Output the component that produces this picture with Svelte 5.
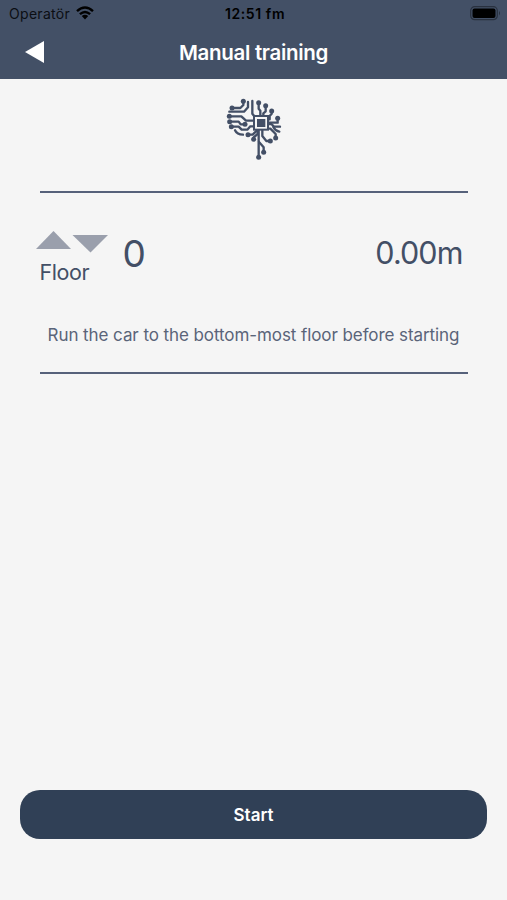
<script lang="ts">
    let carrier = $state('Operatör');
    let time = $state('12:51 fm');
    let floor = $state<number>(0);
    let height = $state<number>(0);

    // copper traces of the brain logo
    const traces = [
        'M70 28V39L61 48H36',
        'M84 30V46L72 59H28',
        'M97 27V65L105 75',
        'M28 73H64L78 86H102',
        'M29 89H56L62 97H75',
        'M34 104H56L65 113H82L91 103H102',
        'M45 115Q51 128 69 128',
        'M84 128H98L111 115',
        'M101 142V136L113 126V113',
        'M116 196V112',
        'M131 181V166L117 150',
        'M151 147H139L127 132V112',
        'M167 138V126L151 110H144',
        'M180 104H162L154 96H144',
        'M178 119Q166 117 160 105',
        'M173 79V92H144',
        'M155 57V65L149 72V82H144',
        'M137 41V58L130 64V75',
        'M116 32V50L121 56V75'
    ];

    const pads = [
        [70, 28], [36, 48], [28, 73], [29, 89], [75, 97], [34, 104],
        [84, 128], [101, 142], [116, 196], [131, 181], [151, 147],
        [167, 138], [173, 79], [155, 57], [137, 41], [116, 32]
    ];
</script>


<div class="screen">
    <header>
        <div class="status-bar">
            <div class="carrier">
                <span>{carrier}</span>
                <svg class="wifi" viewBox="0 0 18 14">
                    <path d="M1 5.2Q9-2.2 17 5.2M3.9 8.2Q9 3.6 14.1 8.2" />
                    <path class="dot" d="M5.8 10.1Q9 7.5 12.2 10.1L9 13.4Z" />
                </svg>
            </div>
            <span class="time">{time}</span>
            <svg class="battery" viewBox="0 0 31 15">
                <rect class="case" x="0.7" y="0.7" width="26.6" height="13" rx="4" />
                <rect x="2.5" y="2.5" width="23" height="9.4" rx="2" />
                <path class="tip" d="M29 5Q31 7.2 29 9.4Z" />
            </svg>
        </div>
        <div class="nav-bar">
            <button class="back" aria-label="Back">
                <svg viewBox="0 0 19 22"><path d="M0 11L19 0V22Z" /></svg>
            </button>
            <h1>Manual training</h1>
        </div>
    </header>

    <main>
        <svg class="logo" viewBox="0 0 204 222">
            {#each traces as d}
                <path {d} />
            {/each}
            {#each pads as [cx, cy]}
                <circle {cx} {cy} r="7.5" />
            {/each}
            <rect class="chip" x="102" y="72" width="42" height="41" />
            <rect class="core" x="111" y="81" width="25" height="24" />
        </svg>

        <section class="panel">
            <div class="readout">
                <div class="direction">
                    <svg class="arrows" viewBox="0 0 72 22">
                        <path d="M0 18L17.5 0L35 18Z" />
                        <path d="M36.500 4H72L54.500 21.500Z" />
                    </svg>
                    <span class="floor-label">Floor</span>
                </div>
                <span class="floor-value">{floor}</span>
                <span class="height-value">{height.toFixed(2)}m</span>
            </div>
            <p class="hint">Run the car to the bottom-most floor before starting</p>
        </section>
    </main>

    <footer>
        <button class="start">Start</button>
    </footer>
</div>

<style>
    :global(body) {
        margin: 0;
    }

    .screen {
        display: flex;
        flex-direction: column;
        height: 900px;
        background-color: #f5f5f5;
        color: #434f66;
        font-family: Inter, "Liberation Sans", sans-serif;
    }

    header {
        height: 79px;
        background-color: #435066;
    }

    .status-bar {
        display: grid;
        grid-template-columns: 1fr auto 1fr;
        align-items: center;
        height: 27px;
        padding: 0 6px 0 9px;
        color: #0b0e13;
        font-size: 14px;
    }

    .carrier {
        display: flex;
        align-items: center;
        gap: 6px;
        letter-spacing: 0.3px;
    }

    .wifi {
        width: 18px;
        height: 14px;
        margin-top: -2px;
        fill: none;
        stroke: #000;
        stroke-width: 2.4;
    }

    .wifi .dot {
        fill: #000;
        stroke: none;
    }

    .time {
        font-weight: 600;
        letter-spacing: 0.6px;
        color: #000;
    }

    .battery {
        justify-self: end;
        width: 31px;
        height: 15px;
    }

    .battery .case {
        fill: none;
        stroke: #29313f;
        stroke-width: 1.2;
    }

    .battery .tip {
        fill: #29313f;
    }

    .nav-bar {
        display: grid;
        grid-template-columns: 60px 1fr 60px;
        align-items: center;
        height: 50px;
    }

    button {
        border: none;
        font-family: inherit;
    }

    .back {
        display: flex;
        padding: 0 0 0 25px;
        background: none;
    }

    .back svg {
        width: 19px;
        height: 22px;
        fill: #fff;
    }

    h1 {
        margin: 1px 0 0;
        text-align: center;
        font-size: 20.5px;
        font-weight: 600;
        letter-spacing: -0.3px;
        color: #fff;
    }

    main {
        flex: 1;
        display: flex;
        flex-direction: column;
        align-items: center;
        padding-top: 13px;
    }

    .logo {
        width: 68px;
        height: 74px;
        fill: none;
        stroke: #434f66;
        stroke-width: 7;
        stroke-linejoin: round;
        stroke-linecap: round;
    }

    .logo circle, .logo .core {
        fill: #434f66;
        stroke: none;
    }

    .logo .chip {
        fill: #f5f5f5;
        stroke-width: 6;
        stroke-linejoin: miter;
    }

    .panel {
        box-sizing: border-box;
        width: 428px;
        height: 183px;
        margin-top: 25px;
        border-top: 2px solid #56617a;
        border-bottom: 2px solid #56617a;
    }

    .readout {
        display: flex;
        align-items: center;
        height: 120px;
        margin: 0 5px 0 -4px;
    }

    .direction {
        display: flex;
        flex-direction: column;
        width: 73px;
        padding-top: 16px;
    }

    .arrows {
        width: 72px;
        height: 22px;
        fill: #9a9fac;
    }

    .floor-label {
        padding-left: 4px;
        font-size: 21.5px;
        line-height: 38px;
        letter-spacing: -0.4px;
    }

    .floor-value {
        margin-left: 14px;
        font-size: 37px;
        font-weight: 380;
    }

    .height-value {
        margin-left: auto;
        padding-bottom: 2px;
        font-size: 30.5px;
        letter-spacing: -0.9px;
    }

    .hint {
        margin: 10px 0 0;
        text-align: center;
        font-size: 17px;
        line-height: 24px;
        letter-spacing: -0.08px;
        white-space: nowrap;
        color: #5a6479;
    }

    footer {
        padding: 0 20px 61px;
    }

    .start {
        display: block;
        width: 467px;
        height: 49px;
        border-radius: 20px;
        background-color: #304056;
        color: #fff;
        font-size: 17px;
        font-weight: 600;
    }
</style>
